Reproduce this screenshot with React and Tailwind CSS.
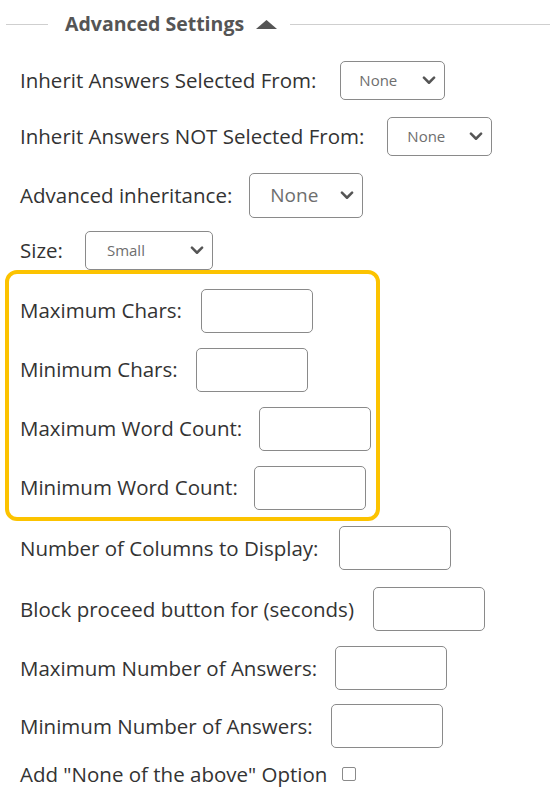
import React from "react";

const Chevron = ({ className = "" }) => (
  <svg viewBox="0 0 12 8" className={className} fill="none" stroke="#555" strokeWidth="2.2" strokeLinecap="round" strokeLinejoin="round">
    <path d="M1.5 1.5 L6 6 L10.5 1.5" />
  </svg>
);

function Select({ value, w, h, text, pl }) {
  return (
    <div className={`flex items-center justify-between rounded-[5px] border border-[#8a8a8a] bg-white pr-[8px] ${w} ${h} ${pl}`}>
      <span className={`text-[#6e6e6e] ${text}`}>{value}</span>
      <Chevron className="w-[14px] h-[9px]" />
    </div>
  );
}

function Input({ gap = "ml-[20px]" }) {
  return <div className={`w-[112px] h-[44px] rounded-[5px] border border-[#8a8a8a] bg-white ${gap}`} />;
}

export default function App() {
  return (
    <div className="w-[550px] h-[800px] bg-white text-[#333] overflow-hidden" style={{ fontFamily: '"Open Sans", sans-serif' }}>
      {/* header */}
      <div className="h-[48px] flex items-center">
        <div className="ml-[6px] w-[42px] h-px bg-[#cfcfcf]" />
        <span className="ml-[17px] text-[19.5px] font-bold text-[#555] leading-none">Advanced Settings</span>
        <svg viewBox="0 0 21 9" className="ml-[12px] w-[21px] h-[9px]" fill="#555">
          <path d="M10.5 0 L21 9 L0 9 Z" />
        </svg>
        <div className="ml-[13px] flex-1 h-px bg-[#cfcfcf]" />
      </div>

      <div className="pl-[20px] text-[20.5px] leading-none">
        <div className="mt-[4px] h-[56px] flex items-center">
          <span>Inherit Answers Selected From:</span>
          <div className="ml-[24px]">
            <Select value="None" w="w-[105px]" h="h-[39px]" text="text-[15px]" pl="pl-[18px]" />
          </div>
        </div>
        <div className="h-[56px] flex items-center">
          <span>Inherit Answers NOT Selected From:</span>
          <div className="ml-[23px]">
            <Select value="None" w="w-[105px]" h="h-[39px]" text="text-[15px]" pl="pl-[19px]" />
          </div>
        </div>
        <div className="h-[62px] flex items-center">
          <span>Advanced inheritance:</span>
          <div className="ml-[17px]">
            <Select value="None" w="w-[114px]" h="h-[45px]" text="text-[19px]" pl="pl-[20px]" />
          </div>
        </div>
        <div className="mt-[5px] h-[39px] flex items-center">
          <span>Size:</span>
          <div className="ml-[22px]">
            <Select value="Small" w="w-[128px]" h="h-[39px]" text="text-[15px]" pl="pl-[21px]" />
          </div>
        </div>
      </div>

      {/* highlighted box */}
      <div className="ml-[5px] w-[375px] border-[4px] border-[#fcc300] rounded-[12px] pl-[11px] pt-[7px] text-[20.5px] leading-none">
        <div className="h-[59px] flex items-center">
          <span>Maximum Chars:</span>
          <Input gap="ml-[19px]" />
        </div>
        <div className="h-[59px] flex items-center">
          <span>Minimum Chars:</span>
          <Input gap="ml-[18px]" />
        </div>
        <div className="h-[59px] flex items-center">
          <span>Maximum Word Count:</span>
          <Input gap="ml-[17px]" />
        </div>
        <div className="h-[59px] flex items-center">
          <span>Minimum Word Count:</span>
          <Input gap="ml-[16px]" />
        </div>
      </div>

      <div className="pl-[20px] text-[20.5px] leading-none">
        <div className="h-[54px] flex items-center">
          <span>Number of Columns to Display:</span>
          <Input gap="ml-[21px]" />
        </div>
        <div className="h-[68px] flex items-center">
          <span>Block proceed button for (seconds)</span>
          <Input gap="ml-[19px]" />
        </div>
        <div className="h-[50px] flex items-center">
          <span>Maximum Number of Answers:</span>
          <Input gap="ml-[18px]" />
        </div>
        <div className="h-[66px] flex items-center">
          <span>Minimum Number of Answers:</span>
          <Input gap="ml-[18px]" />
        </div>
        <div className="h-[30px] flex items-center">
          <span>Add "None of the above" Option</span>
          <div className="ml-[15px] w-[14px] h-[14px] rounded-[2px] border border-[#8a8a8a] bg-white" />
        </div>
      </div>
    </div>
  );
}
